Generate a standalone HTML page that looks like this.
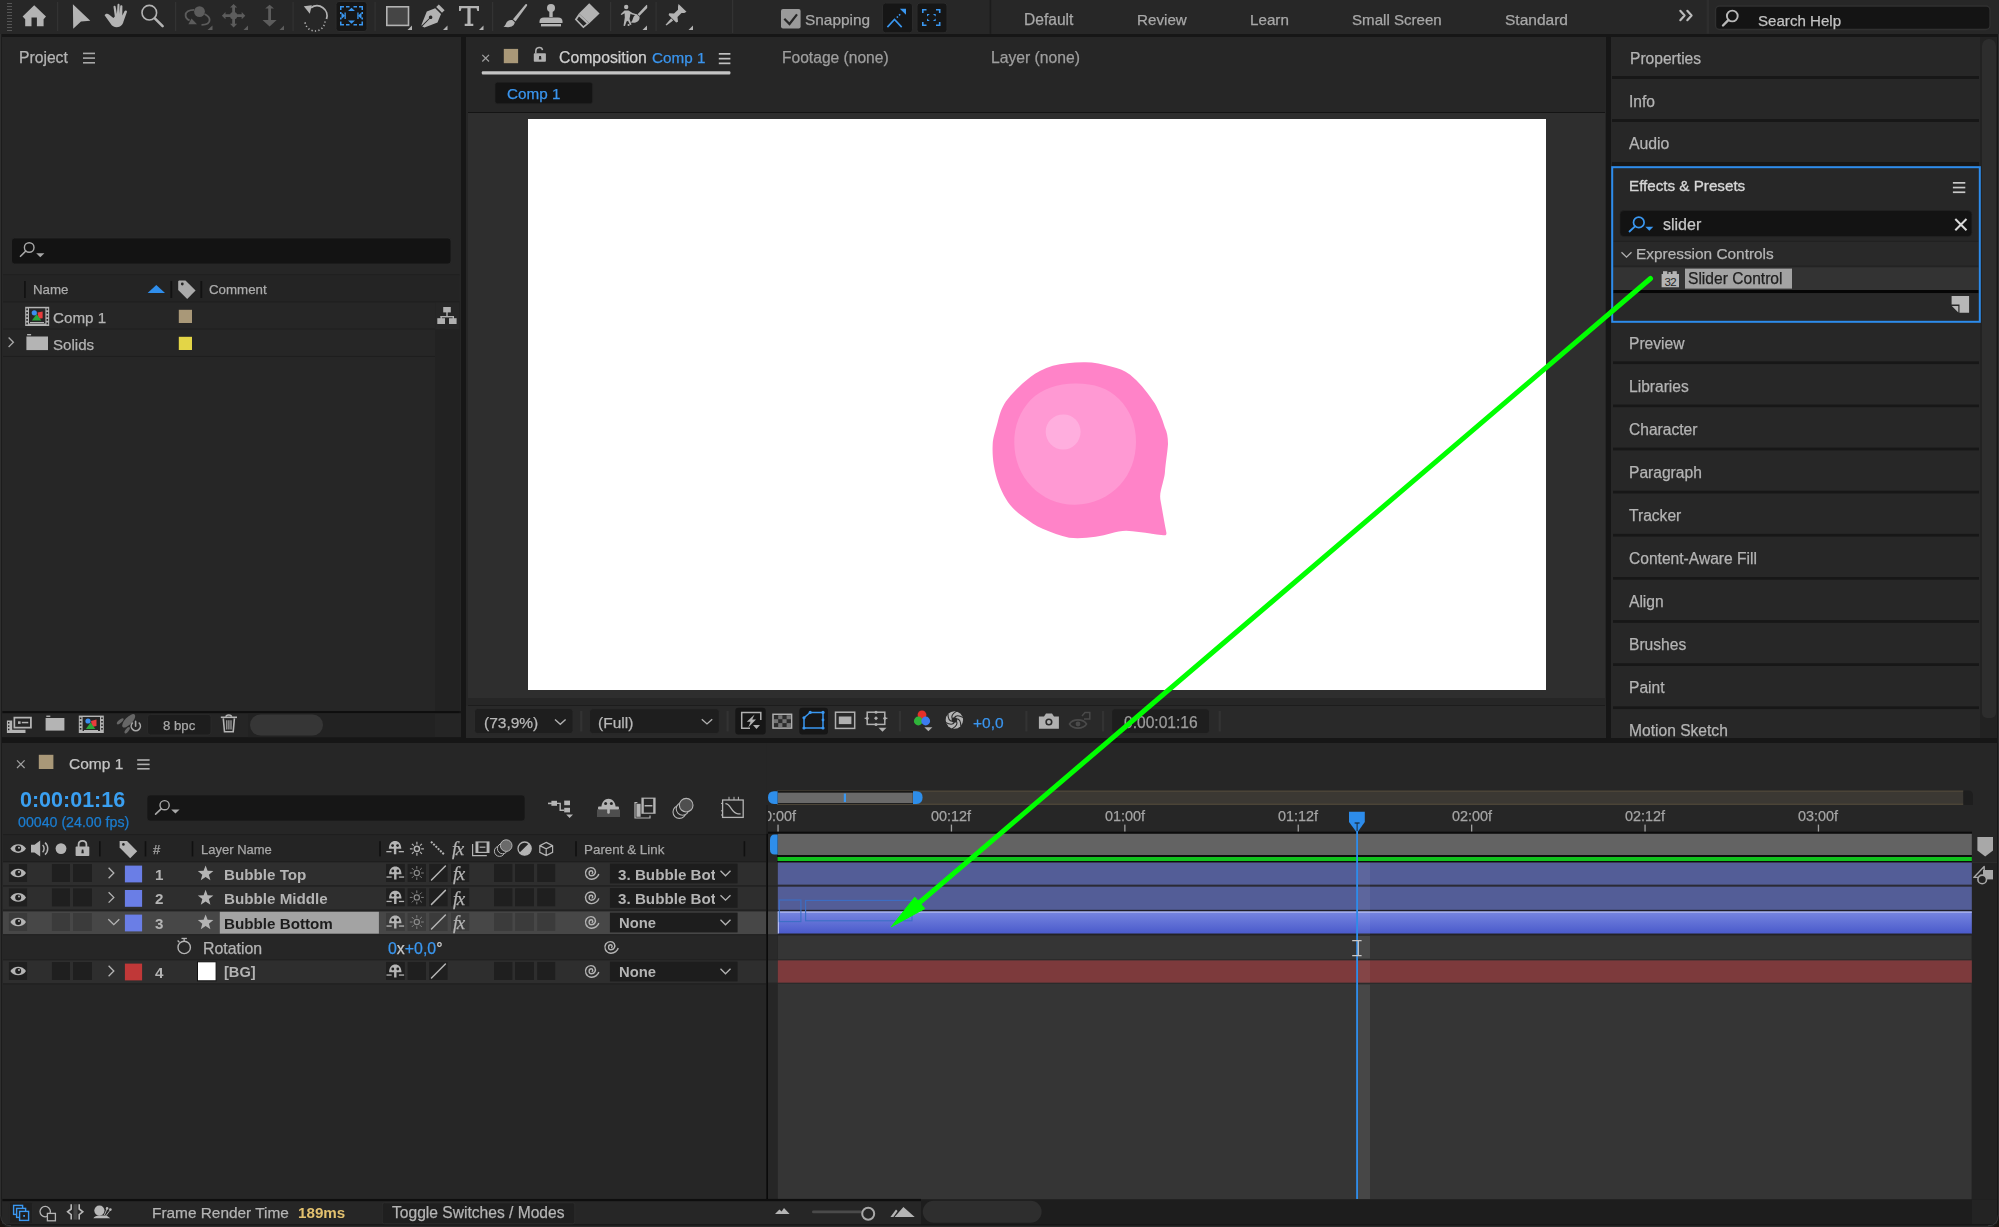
<!DOCTYPE html>
<html><head><meta charset="utf-8">
<style>
*{margin:0;padding:0;box-sizing:border-box}
html,body{width:1999px;height:1227px;overflow:hidden}
body{background:#161616;position:relative;font-family:"Liberation Sans",sans-serif;color:#a9a9a9;font-size:15px;line-height:1;white-space:nowrap}
.a{position:absolute}
.t{position:absolute;line-height:1;will-change:transform;-webkit-text-stroke:0.25px currentColor}
.b{font-weight:bold;-webkit-text-stroke:0}
.blue{color:#3a95ee}
svg{position:absolute;overflow:visible}
</style></head><body>

<!-- ============ TOOLBAR ============ -->
<div class="a" style="left:0;top:0;width:1999px;height:33.7px;background:#272727"></div>
<svg style="left:0;top:0" width="1999" height="34" viewBox="0 0 1999 34">
 <g fill="#565656">
  <rect x="7" y="3" width="5" height="1"/><rect x="7" y="6" width="5" height="1"/><rect x="7" y="9" width="5" height="1"/><rect x="7" y="12" width="5" height="1"/><rect x="7" y="15" width="5" height="1"/><rect x="7" y="18" width="5" height="1"/><rect x="7" y="21" width="5" height="1"/><rect x="7" y="24" width="5" height="1"/><rect x="7" y="27" width="5" height="1"/><rect x="7" y="30" width="5" height="1"/>
 </g>
 <g fill="#333">
  <rect x="57" y="2" width="1.2" height="29"/><rect x="175" y="2" width="1.2" height="29"/><rect x="292.5" y="2" width="1.2" height="29"/><rect x="374.5" y="2" width="1.2" height="29"/><rect x="492" y="2" width="1.2" height="29"/><rect x="610" y="2" width="1.2" height="29"/><rect x="655.5" y="2" width="1.2" height="29"/><rect x="732" y="0" width="1.2" height="33"/>
 </g>
 <g fill="#1c1c1c"><rect x="989.6" y="0" width="1.6" height="33.7"/></g><rect x="1706.6" y="0" width="2.4" height="33.7" fill="#2e2e2e"/>
 <g fill="#b3b3b3">
  <!-- home -->
  <path d="M34.2 5.2 L46 16.6 L43.6 19.2 L43.6 26.2 L36.9 26.2 L36.9 17.6 L31.5 17.6 L31.5 26.2 L25.2 26.2 L25.2 19.2 L22.6 16.6 Z"/>
  <!-- arrow -->
  <path d="M72.9 4.2 L90.3 20.8 L81 21.6 L73.2 28.8 Z"/>
  <!-- hand -->
  <path d="M109 14.5 C107.5 13 105 13.8 104.6 15.2 L110.5 23.5 C112 26 114 27.2 116.8 27.2 C120.5 27.2 122.8 24.8 123.5 21.5 L127 11.8 C127.2 10.5 125.3 9.8 124.6 11 L122.3 15.5 L122.4 6.3 C122.4 5 120.3 5 120.2 6.3 L119.6 14 L119.5 4.7 C119.5 3.5 117.6 3.5 117.5 4.7 L116.9 14 L115.6 6.5 C115.4 5.2 113.4 5.4 113.5 6.8 L114.8 16.6 L113.4 18 Z"/>
  <!-- T -->
  <path d="M459 6 L479 6 L479 11 L477.3 11 L476.5 8.2 L470.6 8.2 L470.6 23.8 L473.3 23.8 L473.3 26 L464.7 26 L464.7 23.8 L467.4 23.8 L467.4 8.2 L461.5 8.2 L460.7 11 L459 11 Z"/>
  <!-- brush -->
  <path d="M525.5 4.2 C526.8 3.6 527.5 4.6 527 5.8 L515.5 21.5 L513 19.3 Z"/>
  <path d="M512.3 20 L514.8 22.3 C514.5 25.5 511.5 27.3 508 27.2 L503.5 26.8 C505.5 25.5 505.8 23.5 507 21.8 C508.3 20.2 510.5 19.6 512.3 20 Z"/>
  <!-- stamp -->
  <circle cx="551" cy="8" r="4"/><rect x="549.3" y="10" width="3.4" height="7"/>
  <path d="M544 17.5 L558 17.5 C561 17.5 562.5 19 562.5 21.5 L562.5 23 L539.5 23 L539.5 21.5 C539.5 19 541 17.5 544 17.5 Z"/>
  <rect x="541" y="24" width="20" height="2.4"/>
  <!-- eraser -->
  <path d="M589.2 3.3 L599.6 13.5 L589.4 23.2 L578.9 13.6 Z"/>
  <path d="M578.9 13.6 L589.4 23.2 L583.3 28.2 L574.8 19.5 Z M579 16.6 L586.6 23.4 L583.4 26 L577 19.6 Z" fill-rule="evenodd"/>
  <!-- puppet -->
  <circle cx="626.2" cy="7" r="2.2"/>
  <path d="M624.5 10.5 L628.5 10.5 L632.5 13 L637.3 14.5 L637 15.5 L632 14.6 L630.5 13.8 L629.5 19 L631.5 24.5 L630 25 L628 20.8 L626.5 21.5 L625 26 L623.5 25.8 L624.8 17.5 L624.6 13.3 L621.5 15 L620.7 14.3 Z"/>
  <path d="M646.6 4.8 L647.2 5.2 L647.2 8 L639.4 16 L637.6 14.2 Z"/>
  <path d="M637 14.6 L639.6 16.8 C640 20.6 637 23.2 632.8 22.8 L630.6 22.4 C632.4 21.5 632.4 20 633.2 17.8 C634 15.6 635.6 14.8 637 14.6 Z"/>
  <circle cx="628.6" cy="25" r="1.1"/>
  <!-- pin -->
  <path d="M678.5 4 L686.5 11.8 L684.3 13 L681.5 13 L677.5 17 L678 21.8 L676.2 22.5 L668.6 15 L669.3 13.2 L674 13.6 L678 9.7 L678 6.6 Z"/>
  <path d="M671.2 18.3 L673.2 20.4 L666.5 25.6 L665.6 24.8 Z"/>
  <!-- corner triangles -->
  <path d="M407.5 30 L412 25.5 L412 30 Z"/><path d="M443 30 L447.5 25.5 L447.5 30 Z"/><path d="M479 30 L483.5 25.5 L483.5 30 Z"/>
  <path d="M642.5 30 L647 25.5 L647 30 Z"/><path d="M688.5 30 L693 25.5 L693 30 Z"/>
 </g>
 <!-- magnifier -->
 <circle cx="149.3" cy="12.7" r="7.3" fill="none" stroke="#b3b3b3" stroke-width="1.6"/>
 <path d="M154.8 18.4 L162.6 26.2" stroke="#b3b3b3" stroke-width="2.6" stroke-linecap="round"/>
 <!-- rect tool -->
 <rect x="386.8" y="6.8" width="21.7" height="18.6" fill="#454545" stroke="#b3b3b3" stroke-width="1.6"/>
 <!-- pen -->
 <g fill="#b3b3b3">
  <path d="M438.8 4.4 L444.6 10.2 L442 12.8 L436.2 7 Z"/>
  <path d="M435.2 8.2 L441 14 L437.5 22.6 L424.5 27.5 L422.2 26.4 L429.8 18.8 C430.6 19.2 431.5 19 432 18.4 C432.6 17.6 432.5 16.6 431.8 16 C431.1 15.3 430 15.4 429.4 16 C428.8 16.6 428.7 17.5 429.1 18.2 L421.5 25.7 L421.5 24.8 L426.8 11.4 Z"/>
 </g>
 <!-- rotate -->
 <path d="M326.5 19 A10 10 0 0 0 311 7.8" fill="none" stroke="#b3b3b3" stroke-width="1.8"/>
 <path d="M303.8 6.2 L311.8 5.2 L309.8 13.8 Z" fill="#b3b3b3"/>
 <path d="M325 21.5 A10 10 0 0 1 305 20.5" fill="none" stroke="#b3b3b3" stroke-width="1.6" stroke-dasharray="1.2 2.3"/>
 <!-- selected box -->
 <rect x="336" y="1.5" width="31" height="30" rx="3" fill="#161616" stroke="#2c2c2c" stroke-width="1"/>
 <g fill="#3a97f0">
  <path d="M340 6 h4 v1.5 h-2.5 v2.5 h-1.5 Z M363 6 h-4 v1.5 h2.5 v2.5 h1.5 Z M340 25.5 h4 v-1.5 h-2.5 v-2.5 h-1.5 Z M363 25.5 h-4 v-1.5 h2.5 v-2.5 h1.5 Z"/>
  <rect x="346" y="6" width="3.5" height="1.5"/><rect x="353.5" y="6" width="3.5" height="1.5"/><rect x="346" y="24" width="3.5" height="1.5"/><rect x="353.5" y="24" width="3.5" height="1.5"/>
  <rect x="340" y="12" width="1.5" height="2"/><rect x="340" y="17.5" width="1.5" height="2"/><rect x="361.5" y="12" width="1.5" height="2"/><rect x="361.5" y="17.5" width="1.5" height="2"/>
  <path d="M348 11 L351.5 7.8 L355 11 Z M348 20.5 L351.5 23.7 L355 20.5 Z M341.5 12.5 L345 15.7 L341.5 19 Z M361.5 12.5 L358 15.7 L361.5 19 Z"/>
  <rect x="344.5" y="12.5" width="1.3" height="6.5"/><rect x="357.3" y="12.5" width="1.3" height="6.5"/>
 </g>
 <!-- dim tools -->
 <g fill="#5c5c5c">
  <circle cx="199.5" cy="11.6" r="5.4"/>
  <path d="M194 9.8 C189 9.8 185.6 12 185.6 15.2 C185.6 17.5 187.2 19.4 189.6 20.4" fill="none" stroke="#5c5c5c" stroke-width="1.8"/>
  <path d="M188.4 24.2 L197 24.2 L191.5 18.5 Z"/>
  <path d="M204.5 14 C207.6 15.5 209.6 17.5 209.6 20 C209.6 23 206.5 24.8 201.5 24.8" fill="none" stroke="#5c5c5c" stroke-width="1.8"/>
  <path d="M233.6 4 L237.2 7.6 L235 7.6 L235 14.3 L241.7 14.3 L241.7 12.1 L245.3 15.7 L241.7 19.3 L241.7 17.1 L235 17.1 L235 23.8 L237.2 23.8 L233.6 27.4 L230 23.8 L232.2 23.8 L232.2 17.1 L225.5 17.1 L225.5 19.3 L221.9 15.7 L225.5 12.1 L225.5 14.3 L232.2 14.3 L232.2 7.6 L230 7.6 Z"/>
  <circle cx="233.6" cy="15.7" r="3.6"/>
  <path d="M269.6 4.8 L274 8.4 L271 8.4 L271 20 L276.7 20 L269.6 26.4 L262.5 20 L268.2 20 L268.2 8.4 L265.2 8.4 Z"/>
  <path d="M207.5 30 L212.5 25.5 L212.5 30 Z"/><path d="M243.5 30 L248 25.5 L248 30 Z"/><path d="M279.5 30 L284 25.5 L284 30 Z"/>
 </g>
</svg>


<!-- toolbar right -->
<svg style="left:0;top:0" width="1999" height="34" viewBox="0 0 1999 34">
 <rect x="781" y="9" width="19.6" height="19.5" rx="2" fill="#9a9a9a"/>
 <path d="M784.3 18.8 L789.5 24 L797 14.3" fill="none" stroke="#262626" stroke-width="2.2"/>
 <rect x="882.5" y="3" width="30" height="29.8" rx="3" fill="#161616" stroke="#2b2b2b" stroke-width="1"/>
 <rect x="917" y="3" width="30" height="29.8" rx="3" fill="#161616" stroke="#2b2b2b" stroke-width="1"/>
 <g stroke="#3a97f0" fill="none" stroke-width="1.6">
  <path d="M887.4 27.1 L894.5 19.5 L901.7 27.1"/>
  <path d="M896.8 17.6 L901 13.4" stroke-dasharray="1.6 1.6"/>
  <path d="M922.8 13 V9.8 H926.5 M936 9.8 H939.7 V13 M922.8 22 V25.2 H926.5 M936 25.2 H939.7 V22"/>
 </g>
 <g fill="#3a97f0">
  <path d="M899.8 8.7 L906 8.7 L906 14.8 Z"/>
  <path d="M927 14 L929.8 14 L927 16.6 Z M935.7 14 L932.9 14 L935.7 16.6 Z M927 21 L929.8 21 L927 18.4 Z M935.7 21 L932.9 21 L935.7 18.4 Z"/>
 </g>
 <!-- >> -->
 <path d="M1680.3 10.8 L1684.6 15.5 L1680.3 20.2 M1687.3 10.8 L1691.6 15.5 L1687.3 20.2" fill="none" stroke="#bcbcbc" stroke-width="2.1" stroke-linecap="round" stroke-linejoin="round"/>
 <!-- search help box -->
 <rect x="1715.5" y="6" width="274.5" height="23.5" rx="4" fill="#141414" stroke="#303030" stroke-width="1.4"/>
 <circle cx="1732.3" cy="16" r="5.4" fill="none" stroke="#b8b8b8" stroke-width="1.9"/>
 <path d="M1728.3 20.2 L1723 25.5" stroke="#b8b8b8" stroke-width="2.4" stroke-linecap="round"/>
</svg>
<div class="t" style="left:805px;top:11.6px;font-size:15.4px;color:#a8a8a8">Snapping</div>
<div class="t" style="left:1024px;top:11.9px;font-size:15.6px;color:#a8a8a8">Default</div>
<div class="t" style="left:1137px;top:11.9px;font-size:15.2px;color:#a8a8a8">Review</div>
<div class="t" style="left:1250px;top:11.9px;font-size:15.2px;color:#a8a8a8">Learn</div>
<div class="t" style="left:1352px;top:11.9px;font-size:15.1px;color:#a8a8a8">Small Screen</div>
<div class="t" style="left:1505px;top:11.9px;font-size:15.5px;color:#a8a8a8">Standard</div>
<div class="t" style="left:1758px;top:12.6px;font-size:15.1px;color:#c2c2c2">Search Help</div>

<!-- ============ PROJECT PANEL ============ -->
<div class="a" style="left:2px;top:37px;width:459px;height:674px;background:#262626"></div>
<div class="t" style="left:19px;top:50.3px;font-size:15.7px;color:#b4b4b4">Project</div>
<svg style="left:0;top:0" width="470" height="745" viewBox="0 0 470 745">
 <g fill="#a8a8a8"><rect x="83" y="52.6" width="12" height="1.6"/><rect x="83" y="57.3" width="12" height="1.6"/><rect x="83" y="62" width="12" height="1.6"/></g>
 <rect x="11.5" y="238" width="439.5" height="26" rx="3" fill="#131313" stroke="#2a2a2a" stroke-width="0.8"/>
 <circle cx="29.2" cy="247.5" r="4.8" fill="none" stroke="#a8a8a8" stroke-width="1.4"/>
 <path d="M25.8 251 L20.5 256.3" stroke="#a8a8a8" stroke-width="1.6" stroke-linecap="round"/>
 <path d="M36.2 253.2 L44.4 253.2 L40.3 257.2 Z" fill="#a8a8a8"/>
 <!-- header row -->
 <rect x="3" y="274.3" width="456.5" height="1" fill="#1f1f1f"/>
 <rect x="3" y="275.3" width="456.5" height="26" fill="#242424"/>
 <rect x="3" y="301.3" width="456.5" height="1.2" fill="#1f1f1f"/>
 <g fill="#121212"><rect x="24" y="281" width="1.8" height="17"/><rect x="170.4" y="281" width="1.8" height="17"/><rect x="200.4" y="281" width="1.8" height="17"/></g>
 <path d="M147.6 293 L156.3 285 L165 293 Z" fill="#2f8eec"/>
 <path d="M179 280.5 L185.5 280.5 L195.6 290.6 L187.2 299 L178.2 290 L178.2 281.3 Z" fill="#aaaaaa"/>
 <circle cx="182.3" cy="284" r="1.4" fill="#242424"/>
 <!-- right column -->
 <rect x="435" y="302.5" width="24.7" height="408.5" fill="#222222"/>
 <rect x="435.5" y="302.5" width="24" height="26.5" fill="#262626"/>
 <g fill="#b0b0b0">
  <rect x="443.2" y="307" width="7.6" height="5.4"/><rect x="446.3" y="312" width="1.4" height="4.5"/>
  <rect x="440.5" y="316" width="13.5" height="1.4"/><rect x="440.5" y="316" width="1.4" height="3"/><rect x="452.6" y="316" width="1.4" height="3"/>
  <rect x="437.3" y="318.2" width="7.7" height="5.8"/><rect x="449" y="318.2" width="7.6" height="5.8"/>
 </g>
 <!-- rows -->
 <rect x="3" y="328.5" width="432" height="1" fill="#1e1e1e"/>
 <rect x="3" y="355.9" width="432" height="1" fill="#1e1e1e"/>
 <!-- comp icon -->
 <rect x="25.2" y="306.8" width="24" height="19.2" fill="#b4b4b4"/>
 <rect x="29" y="308.3" width="16.4" height="15.2" fill="#262626"/>
 <g fill="#262626"><rect x="26.3" y="308.5" width="1.6" height="1.8"/><rect x="26.3" y="312" width="1.6" height="1.8"/><rect x="26.3" y="315.5" width="1.6" height="1.8"/><rect x="26.3" y="319" width="1.6" height="1.8"/><rect x="26.3" y="322.5" width="1.6" height="1.8"/>
 <rect x="46.5" y="308.5" width="1.6" height="1.8"/><rect x="46.5" y="312" width="1.6" height="1.8"/><rect x="46.5" y="315.5" width="1.6" height="1.8"/><rect x="46.5" y="319" width="1.6" height="1.8"/><rect x="46.5" y="322.5" width="1.6" height="1.8"/></g>
 <rect x="30" y="322" width="14" height="1" fill="#b4b4b4"/>
 <path d="M37.5 312.5 L42.6 311.4 L42.6 318.2 L38.5 318.8 Z" fill="#e83c3c"/>
 <path d="M36.6 314 L41.3 320.5 L31.9 320.5 Z" fill="#2aa63a"/>
 <circle cx="34.3" cy="312.8" r="2.6" fill="#3c8ef0"/>
 <rect x="178.8" y="309.8" width="13.2" height="13.2" fill="#a99878"/>
 <!-- solids -->
 <path d="M8.6 337.5 L13.4 342.2 L8.6 347" fill="none" stroke="#a8a8a8" stroke-width="1.3"/>
 <rect x="27.1" y="334" width="4" height="1.4" fill="#b4b4b4"/>
 <rect x="26.4" y="336.5" width="21.6" height="13.6" fill="#b4b4b4"/>
 <rect x="178.8" y="336.8" width="13.2" height="13.2" fill="#e3d547"/>
 <!-- bottom toolbar -->
 <rect x="3" y="711.2" width="456.5" height="2" fill="#0e0e0e"/>
 <rect x="2" y="713.2" width="459" height="24" fill="#252525"/>
 <rect x="248" y="713.2" width="187" height="24" fill="#222222"/>
 <rect x="250" y="714.5" width="73" height="21" rx="10.5" fill="#363636"/>
 <!-- interpret footage -->
 <g fill="#b4b4b4">
  <path d="M13.5 716.8 H31.8 V728.5 H13.5 Z M15.2 718.6 V726.8 H30 V718.6 Z" fill-rule="evenodd"/>
  <rect x="18" y="721.3" width="2.6" height="2.6"/><rect x="21.8" y="721.8" width="6.5" height="1.5"/>
  <path d="M6.9 720.4 H12.2 V729.8 H25.5 V733 H6.9 Z"/>
 </g>
 <g fill="#252525"><rect x="8" y="722" width="1.4" height="1.6"/><rect x="8" y="725.3" width="1.4" height="1.6"/><rect x="8" y="728.6" width="1.4" height="1.6"/></g>
 <!-- folder -->
 <rect x="46.3" y="715.6" width="4" height="1.3" fill="#b4b4b4"/>
 <rect x="45.6" y="718" width="18.8" height="12.6" fill="#b4b4b4"/>
 <!-- new comp -->
 <rect x="78.8" y="715.6" width="25" height="17.4" fill="#b4b4b4"/>
 <rect x="82.6" y="717" width="17.4" height="14" fill="#252525"/>
 <g fill="#252525"><rect x="79.8" y="717.5" width="1.6" height="1.6"/><rect x="79.8" y="721" width="1.6" height="1.6"/><rect x="79.8" y="724.5" width="1.6" height="1.6"/><rect x="79.8" y="728" width="1.6" height="1.6"/>
 <rect x="101.2" y="717.5" width="1.6" height="1.6"/><rect x="101.2" y="721" width="1.6" height="1.6"/><rect x="101.2" y="724.5" width="1.6" height="1.6"/><rect x="101.2" y="728" width="1.6" height="1.6"/></g>
 <rect x="84" y="730" width="14" height="1" fill="#b4b4b4"/>
 <path d="M91 721 L96.5 719.5 L96.5 726 L92 727 Z" fill="#e83c3c"/>
 <path d="M90.6 722.5 L95.3 729 L85.9 729 Z" fill="#2aa63a"/>
 <circle cx="88" cy="721" r="2.6" fill="#3c8ef0"/>
 <!-- render (dim) -->
 <ellipse cx="128.7" cy="720.8" rx="8.6" ry="3.6" transform="rotate(-46 128.7 720.8)" fill="#666"/>
 <ellipse cx="120.2" cy="721.3" rx="4.2" ry="1.6" transform="rotate(-40 120.2 721.3)" fill="#666"/>
 <ellipse cx="127.2" cy="730.2" rx="3.8" ry="1.6" transform="rotate(-52 127.2 730.2)" fill="#666"/>
 <path d="M132.4 723 A4.6 4.6 0 1 0 139.2 723" fill="none" stroke="#a8a8a8" stroke-width="1.6" stroke-linecap="round"/>
 <rect x="134.8" y="720.6" width="1.6" height="6.4" rx="0.8" fill="#a8a8a8"/>
 <!-- 8bpc -->
 <rect x="147.5" y="714.4" width="63.5" height="20.6" rx="3" fill="#1d1d1d" stroke="#2b2b2b" stroke-width="0.8"/>
 <!-- trash -->
 <g fill="none" stroke="#b4b4b4" stroke-width="1.6">
  <path d="M223.3 718.4 L224.5 731.8 L233.2 731.8 L234.4 718.4"/>
  <path d="M220.8 717.3 H237"/>
  <path d="M226 716.8 C226 714.4 231.5 714.4 231.5 716.8"/>
  <path d="M226.8 720.3 V729.5 M228.9 720.3 V729.5 M231 720.3 V729.5" stroke-width="1.1"/>
 </g>
</svg>
<div class="t" style="left:33px;top:283.4px;font-size:13.3px;color:#ababab">Name</div>
<div class="t" style="left:209.4px;top:283.4px;font-size:13.3px;color:#ababab">Comment</div>
<div class="t" style="left:52.8px;top:310px;font-size:15.2px;color:#b4b4b4">Comp 1</div>
<div class="t" style="left:52.8px;top:337.2px;font-size:15.1px;color:#b4b4b4">Solids</div>
<div class="t" style="left:163px;top:719.2px;font-size:13.2px;color:#a8a8a8">8 bpc</div>

<!-- ============ COMP PANEL ============ -->
<div class="a" style="left:466px;top:37px;width:1140px;height:700.7px;background:#262626"></div>
<div class="a" style="left:468px;top:111.8px;width:1137.3px;height:1.4px;background:#141414"></div>
<div class="a" style="left:468px;top:113.2px;width:1137.3px;height:585.3px;background:#2e2e2e"></div>
<div class="a" style="left:468px;top:704.8px;width:1137.3px;height:1.4px;background:#1c1c1c"></div>
<div class="a" style="left:466px;top:706.2px;width:1140px;height:31.5px;background:#292929"></div>
<div class="a" style="left:528px;top:119px;width:1017.5px;height:570.8px;background:#ffffff"></div>
<svg style="left:0;top:0" width="1620" height="745" viewBox="0 0 1620 745">
 <path d="M482.3 54.8 L489 61.5 M489 54.8 L482.3 61.5" stroke="#a0a0a0" stroke-width="1.2"/>
 <rect x="503.8" y="48.9" width="14.3" height="14.3" fill="#a99878"/>
 <!-- lock -->
 <path d="M535.8 53.5 V51 C535.8 46.6 542 46.2 542.5 50.2" fill="none" stroke="#b0b0b0" stroke-width="1.5"/>
 <rect x="533.8" y="53.3" width="12.1" height="8.4" rx="0.8" fill="#b0b0b0"/>
 <path d="M539.2 56 h1.8 l0.4 3.5 h-2.6 Z" fill="#262626"/>
 <g fill="#c0c0c0"><rect x="718.8" y="53" width="11.6" height="1.7"/><rect x="718.8" y="57.8" width="11.6" height="1.7"/><rect x="718.8" y="62.5" width="11.6" height="1.7"/></g>
 <rect x="481.8" y="71.2" width="248.6" height="3.3" rx="1" fill="#c4c4c4"/>
 <rect x="495" y="82.2" width="97.6" height="21.5" rx="2.5" fill="#141414" stroke="#262626" stroke-width="0.6"/>
 <!-- viewer bottom toolbar -->
 <rect x="474.5" y="708.6" width="98.5" height="25" rx="3" fill="#1e1e1e" stroke="#2c2c2c" stroke-width="0.8"/>
 <path d="M555 719.5 L560.3 724.2 L565.6 719.5" fill="none" stroke="#b0b0b0" stroke-width="1.4"/>
 <rect x="580.2" y="711" width="2.2" height="20.5" fill="#333"/>
 <rect x="589.6" y="708.8" width="129.7" height="24.8" rx="3" fill="#1e1e1e" stroke="#2c2c2c" stroke-width="0.8"/>
 <path d="M701.8 719.2 L707 723.9 L712.2 719.2" fill="none" stroke="#b0b0b0" stroke-width="1.4"/>
 <rect x="726.5" y="711" width="2.2" height="20.5" fill="#333"/>
 <rect x="735.3" y="707.7" width="30.4" height="26.7" rx="3" fill="#161616"/>
 <rect x="799.3" y="707.7" width="28.7" height="26.7" rx="3" fill="#161616"/>
 <g fill="none" stroke="#b0b0b0" stroke-width="1.5">
  <path d="M750 728.3 H741.7 V712.6 H760.8 V720"/>
  <rect x="773" y="714.3" width="18.6" height="13.8"/>
  <rect x="835.5" y="712.2" width="19.2" height="16.2"/>
  <rect x="867.2" y="712.2" width="17.6" height="12.2"/>
 </g>
 <path d="M754.6 714.6 L746.8 721.8 L750.6 721.8 L748.2 727.4 L756 719.6 L752.2 719.6 Z" fill="#b0b0b0"/>
 <path d="M753 725 L760 725 L756.5 729 Z" fill="#b0b0b0"/>
 <g fill="#2c2c2c"><rect x="774" y="715.3" width="4.2" height="3.9"/><rect x="782.4" y="715.3" width="4.2" height="3.9"/><rect x="778.2" y="719.2" width="4.2" height="3.9"/><rect x="786.6" y="719.2" width="4.2" height="3.9"/><rect x="774" y="723.1" width="4.2" height="3.9"/><rect x="782.4" y="723.1" width="4.2" height="3.9"/></g>
 <g fill="#747474"><rect x="778.2" y="715.3" width="4.2" height="3.9"/><rect x="786.6" y="715.3" width="4.2" height="3.9"/><rect x="774" y="719.2" width="4.2" height="3.9"/><rect x="782.4" y="719.2" width="4.2" height="3.9"/><rect x="778.2" y="723.1" width="4.2" height="3.9"/><rect x="786.6" y="723.1" width="4.2" height="3.9"/></g>
 <path d="M804 728 V717.8 L810.2 712.4 H823 V728 Z" fill="none" stroke="#3a97f0" stroke-width="1.5"/>
 <g fill="#3a97f0"><circle cx="804" cy="728" r="1.6"/><circle cx="823" cy="728" r="1.6"/><circle cx="804" cy="717.8" r="1.6"/><circle cx="810.2" cy="712.4" r="1.6"/><circle cx="823" cy="712.4" r="1.6"/><circle cx="823" cy="720" r="1.4"/></g>
 <rect x="838.8" y="716.5" width="12.6" height="7.6" fill="#b0b0b0"/>
 <g fill="#b0b0b0">
  <circle cx="876" cy="712.2" r="1.5"/><circle cx="876" cy="724.4" r="1.5"/><circle cx="867.2" cy="718.3" r="1.5"/><circle cx="884.8" cy="718.3" r="1.5"/>
  <path d="M876 716.3 L878 718.3 L876 720.3 L874 718.3 Z"/>
  <rect x="864.6" y="717.7" width="2.6" height="1.2"/><rect x="884.8" y="717.7" width="2.6" height="1.2"/>
  <path d="M878.5 727.8 L886.5 727.8 L882.5 731.8 Z"/>
 </g>
 <rect x="898.8" y="711" width="2.2" height="20.5" fill="#333"/>
 <circle cx="922" cy="714.8" r="4.4" fill="#e5302a"/>
 <circle cx="918.3" cy="721" r="4.4" fill="#2fb43a"/>
 <circle cx="925.7" cy="721" r="4.4" fill="#3c7cf0"/>
 <path d="M924.4 727.2 L932.4 727.2 L928.4 731.2 Z" fill="#b0b0b0"/>
 <!-- aperture -->
 <circle cx="954.4" cy="720" r="8.7" fill="#b4b4b4"/>
 <circle cx="954.4" cy="720" r="2.8" fill="#292929"/>
 <path d="M954.40 717.60 Q956.62 713.89 963.29 717.62 M956.48 718.80 Q960.80 718.87 960.91 726.51 M956.48 721.20 Q958.58 724.98 952.02 728.89 M954.40 722.40 Q952.18 726.11 945.51 722.38 M952.32 721.20 Q948.00 721.13 947.89 713.49 M952.32 718.80 Q950.22 715.02 956.78 711.11 " fill="none" stroke="#292929" stroke-width="1.1"/>
 <rect x="1025.3" y="711" width="2.2" height="20.5" fill="#333"/>
 <!-- camera -->
 <path d="M1038.9 716.5 H1044 L1046 713.6 H1052 L1054 716.5 H1058.9 V728.8 H1038.9 Z" fill="#b0b0b0"/>
 <circle cx="1048.9" cy="722" r="3.6" fill="#292929"/><circle cx="1048.9" cy="722" r="2" fill="#b0b0b0"/>
 <!-- eye dim -->
 <path d="M1069.5 724 C1073 718.5 1083 718.5 1086.5 724 C1083 729.5 1073 729.5 1069.5 724 Z" fill="none" stroke="#4a4a4a" stroke-width="1.6"/>
 <circle cx="1078" cy="724" r="2.4" fill="#4a4a4a"/>
 <path d="M1082 716 L1085 712.5 H1089.8 V719 H1084" fill="none" stroke="#4a4a4a" stroke-width="1.4"/>
 <rect x="1102" y="711" width="2.2" height="20.5" fill="#333"/>
 <rect x="1111.7" y="708.8" width="97.7" height="24.8" rx="3" fill="#1e1e1e" stroke="#2c2c2c" stroke-width="0.8"/>
 <rect x="1218.6" y="711" width="2.2" height="20.5" fill="#333"/>
</svg>
<div class="t" style="left:558.7px;top:49.7px;font-size:15.8px;color:#d0d0d0">Composition</div>
<div class="t blue" style="left:651.7px;top:49.9px;font-size:15.25px">Comp 1</div>
<div class="t" style="left:782px;top:49.9px;font-size:15.6px;color:#9e9e9e">Footage (none)</div>
<div class="t" style="left:991px;top:49.9px;font-size:15.7px;color:#9e9e9e">Layer (none)</div>
<div class="t blue" style="left:507px;top:86.3px;font-size:15.25px">Comp 1</div>
<div class="t" style="left:484px;top:714.6px;font-size:15.5px;color:#b8b8b8">(73,9%)</div>
<div class="t" style="left:598.4px;top:715.2px;font-size:15.5px;color:#b8b8b8">(Full)</div>
<div class="t blue" style="left:973.2px;top:715.3px;font-size:15.5px">+0,0</div>
<div class="t" style="left:1123.7px;top:715.3px;font-size:15.6px;color:#9c9c9c">0:00:01:16</div>


<svg style="left:0;top:0" width="1620" height="745" viewBox="0 0 1620 745">
 <path d="M1083.4 362.2 C1072 362.5 1062 363.5 1052.8 365.7 C1044 368.5 1036 372.5 1030.4 376.9 C1020 385 1012 393 1006 401.3 C1001 409 999.5 415 997.8 421.7 C995 432 993 438 992.7 444.1 C992.3 452 992.8 458 993.7 464.5 C996 478 1000 489 1006 499.1 C1011 507.5 1017 512.5 1024.3 517.4 C1030 521.5 1035 525.5 1042.6 528.7 C1052 532.8 1060 535.5 1069.1 537.8 C1078 538.8 1087 538 1095.6 536.8 C1107 535 1116 531 1126.2 530.7 C1138 531 1150 534 1163.5 535.3 C1166 535.6 1166.8 534.5 1166.3 532.3 C1164 521 1162.5 511 1160.8 502 C1159.8 497 1160 494 1161 490 C1163 482 1164.5 477 1164.9 472.6 C1165.6 463 1167.5 452 1168 444.1 C1168 437 1167 432 1164.9 427.8 C1162 418 1159 411 1154.7 403.3 C1148 393 1140 383 1130.2 374.8 C1124 370 1118 368 1111.9 366.7 C1102 364 1092 361.8 1083.4 362.2 Z" fill="#ff83c8"/>
 <path d="M1075 383.6 C1093 383.3 1108 388 1119 399 C1130 410 1136.2 425 1136 442 C1135.8 458 1131 473 1120 485 C1109 497 1093 504.5 1075 504.8 C1058 505 1043 498 1032 487 C1020 475 1014.5 459 1014.3 443 C1014 426 1020 411 1031 399.5 C1042 389 1058 383.8 1075 383.6 Z" fill="#ff99d3"/>
 <path d="M1063.3 414.5 C1073 414.4 1080.6 422 1080.6 431.8 C1080.6 441.5 1073 449.6 1063.3 449.6 C1053.5 449.6 1045.7 441.5 1045.7 431.8 C1045.7 422 1053.5 414.6 1063.3 414.5 Z" fill="#ffaede"/>
</svg>

<!-- ============ RIGHT PANELS ============ -->
<div class="a" style="left:1611px;top:37px;width:369.3px;height:700.8px;background:#272727"></div>
<div class="a" style="left:1980.3px;top:37px;width:17px;height:700.8px;background:#222222"></div>
<div class="a" style="left:1981.8px;top:39px;width:14.2px;height:679px;background:#2d2d2d;border-radius:7px 7px 5px 5px"></div>
<svg style="left:0;top:0" width="1999" height="745" viewBox="0 0 1999 745">
 <g fill="#171717">
  <rect x="1612" y="76" width="367" height="3"/><rect x="1612" y="119" width="367" height="3"/><rect x="1612" y="162" width="367" height="4"/>
<rect x="1613" y="361.40" width="366" height="2.7"/><rect x="1613" y="404.52" width="366" height="2.7"/><rect x="1613" y="447.64" width="366" height="2.7"/><rect x="1613" y="490.76" width="366" height="2.7"/><rect x="1613" y="533.88" width="366" height="2.7"/><rect x="1613" y="577.00" width="366" height="2.7"/><rect x="1613" y="620.12" width="366" height="2.7"/><rect x="1613" y="663.24" width="366" height="2.7"/><rect x="1613" y="706.36" width="366" height="2.7"/>
 </g>
 <!-- effects panel -->
 <rect x="1613.2" y="168.2" width="365.6" height="152.8" fill="#272727"/>
 <g fill="#c8c8c8"><rect x="1952.9" y="182" width="12.4" height="1.7"/><rect x="1952.9" y="186.7" width="12.4" height="1.7"/><rect x="1952.9" y="191.4" width="12.4" height="1.7"/></g>
 <rect x="1620" y="210.6" width="351.8" height="26" rx="4" fill="#131313" stroke="#242424" stroke-width="0.6"/>
 <circle cx="1638.8" cy="222.4" r="5.3" fill="none" stroke="#3a97f0" stroke-width="1.7"/>
 <path d="M1635 226.3 L1629.5 231.5" stroke="#3a97f0" stroke-width="1.8" stroke-linecap="round"/>
 <path d="M1645.3 226.7 L1653.3 226.7 L1649.3 230.7 Z" fill="#3a97f0"/>
 <path d="M1955.3 219 L1966.5 230.2 M1966.5 219 L1955.3 230.2" stroke="#dadada" stroke-width="2"/>
 <rect x="1613.2" y="240.8" width="365.4" height="1" fill="#202020"/>
 <rect x="1613.2" y="241.8" width="365.4" height="24" fill="#292929"/>
 <rect x="1613.2" y="265.7" width="365.4" height="1.6" fill="#232323"/>
 <rect x="1613.2" y="267.3" width="365.4" height="22.8" fill="#333333"/>
 <rect x="1613.2" y="290" width="365.4" height="3.2" fill="#060606"/>
 <rect x="1613.2" y="293.2" width="365.4" height="27.6" fill="#282828"/>
 <path d="M1621.5 252.2 L1626.5 257.2 L1631.5 252.2" fill="none" stroke="#b0b0b0" stroke-width="1.3"/>
 <!-- slider icon -->
 <path d="M1661.6 274 H1668.5 V272 H1670.8 V274 H1679 V287.2 H1661.6 Z" fill="#b4b4b4"/>
 <rect x="1663" y="271.2" width="4.3" height="3" fill="#b4b4b4"/><rect x="1672.5" y="271.2" width="4.3" height="3" fill="#b4b4b4"/>
 <rect x="1685" y="268.6" width="107" height="20" fill="#a3a3a3"/>
 <text x="1670.3" y="286" font-family="Liberation Sans" font-size="11.5" fill="#262626" text-anchor="middle" letter-spacing="-0.5">32</text>
 <!-- new preset icon -->
 <path d="M1951.6 295.9 H1969.1 V312.8 H1959.5 V304.5 H1951.6 Z" fill="#b8b8b8"/>
 <path d="M1951.8 306 H1958.3 V312.6 Z" fill="#b8b8b8"/>
 <rect x="1612.2" y="167.2" width="367.6" height="154.6" fill="none" stroke="#2d8cec" stroke-width="2"/>
</svg>
<div class="t" style="left:1629.5px;top:51.3px;font-size:15.6px;color:#b4b4b4">Properties</div>
<div class="t" style="left:1629.2px;top:93.8px;font-size:15.6px;color:#b4b4b4">Info</div>
<div class="t" style="left:1628.9px;top:136.2px;font-size:15.8px;color:#b4b4b4">Audio</div>
<div class="t" style="left:1629.3px;top:178.4px;font-size:15.2px;color:#d6d6d6;-webkit-text-stroke:0.35px #d6d6d6">Effects &amp; Presets</div>
<div class="t" style="left:1663px;top:217.4px;font-size:16px;color:#c8c8c8">slider</div>
<div class="t" style="left:1635.5px;top:245.9px;font-size:15.4px;color:#b4b4b4">Expression Controls</div>
<div class="t" style="left:1688px;top:271.4px;font-size:15.6px;color:#1e1e1e">Slider Control</div>
<div class="t" style="left:1629px;top:336.4px;font-size:15.6px;color:#b4b4b4">Preview</div>
<div class="t" style="left:1629px;top:379.4px;font-size:15.6px;color:#b4b4b4">Libraries</div>
<div class="t" style="left:1629px;top:422.4px;font-size:15.6px;color:#b4b4b4">Character</div>
<div class="t" style="left:1629px;top:465.4px;font-size:15.6px;color:#b4b4b4">Paragraph</div>
<div class="t" style="left:1629px;top:508.4px;font-size:15.6px;color:#b4b4b4">Tracker</div>
<div class="t" style="left:1629px;top:551.4px;font-size:15.6px;color:#b4b4b4">Content-Aware Fill</div>
<div class="t" style="left:1629px;top:594.4px;font-size:15.6px;color:#b4b4b4">Align</div>
<div class="t" style="left:1629px;top:637.4px;font-size:15.6px;color:#b4b4b4">Brushes</div>
<div class="t" style="left:1629px;top:680.4px;font-size:15.6px;color:#b4b4b4">Paint</div>
<div class="a" style="left:1611px;top:709.6px;width:369px;height:28.2px;overflow:hidden;background:#272727"><div class="t" style="left:18px;top:13.8px;font-size:15.6px;color:#b4b4b4">Motion Sketch</div></div>

<!-- ============ TIMELINE ============ -->

<!-- ============ TIMELINE RIGHT ============ -->
<svg style="left:0;top:0" width="1999" height="1227" viewBox="0 0 1999 1227">
<rect x="766" y="743" width="1231" height="458" fill="#262626"/>
<rect x="777.8" y="862.4" width="1194" height="337" fill="#353535"/>
<rect x="1971.8" y="862" width="25.2" height="339" fill="#222222"/>
<rect x="766.2" y="805" width="1.8" height="28.8" fill="#1e1e1e"/>
<rect x="766.2" y="833.8" width="1.8" height="367" fill="#0a0a0a"/>
<rect x="777" y="790.6" width="1186.4" height="14.3" fill="#3b3833"/>
<rect x="777" y="790.6" width="1186.4" height="1.3" fill="#4e4639"/>
<rect x="777" y="803.6" width="1186.4" height="1.3" fill="#4e4639"/>
<path d="M1963.4 790.6 H1968 Q1973 790.6 1973 795.6 V805 H1963.4 Z" fill="#1e1e1e"/>
<rect x="776" y="791.2" width="137.6" height="12.8" fill="#0e0e0e"/>
<rect x="777.6" y="792.6" width="135.2" height="10.6" fill="#6a6a6a"/>
<rect x="843.8" y="793.6" width="2.2" height="8.4" fill="#3a97f0"/>
<path d="M777.6 791.2 H774 Q768 791.2 768 797.6 Q768 804 774 804 H777.6 Z" fill="#2e8eea"/>
<path d="M913 791.2 H916.4 Q922.6 791.2 922.6 797.6 Q922.6 804 916.4 804 H913 Z" fill="#2e8eea"/>
<rect x="777.4" y="824.6" width="1.3" height="7.2" fill="#a0a0a0"/>
<rect x="950.8" y="824.6" width="1.3" height="7.2" fill="#a0a0a0"/>
<rect x="1124.2" y="824.6" width="1.3" height="7.2" fill="#a0a0a0"/>
<rect x="1297.6000000000001" y="824.6" width="1.3" height="7.2" fill="#a0a0a0"/>
<rect x="1471.0" y="824.6" width="1.3" height="7.2" fill="#a0a0a0"/>
<rect x="1644.4" y="824.6" width="1.3" height="7.2" fill="#a0a0a0"/>
<rect x="1817.8000000000002" y="824.6" width="1.3" height="7.2" fill="#a0a0a0"/>
<rect x="768" y="831.7" width="1204" height="2.1" fill="#0c0c0c"/>
<rect x="777.6" y="833.8" width="1194.2" height="21.2" fill="#636363"/>
<rect x="768" y="833.8" width="9.6" height="21.2" fill="#262626"/>
<path d="M777.6 834.4 H774.6 Q770 834.4 770 840 V849.6 Q770 854.6 774.6 854.6 H777.6 Z" fill="#2e8eea"/>
<rect x="777" y="855" width="1194.8" height="2" fill="#0c0c0c"/>
<rect x="777.6" y="857" width="1194.2" height="4" fill="#11c21d"/>
<rect x="777" y="861" width="1194.8" height="1.4" fill="#0c0c0c"/>
<rect x="768" y="862.4" width="9.8" height="22.8" fill="#2e2e2e"/>
<rect x="768" y="886.8" width="9.8" height="22.8" fill="#2e2e2e"/>
<rect x="768" y="911.4" width="9.8" height="22.8" fill="#454545"/>
<rect x="768" y="935.4" width="9.8" height="24" fill="#2a2a2a"/>
<rect x="768" y="960.4" width="9.8" height="22.2" fill="#333333"/>
<rect x="777.8" y="862.6" width="1194" height="22.2" fill="#535d97"/>
<rect x="777.8" y="884.8" width="1194" height="1.9" fill="#2a2a35"/>
<rect x="777.8" y="886.7" width="1194" height="23.2" fill="#535d97"/>
<rect x="777.8" y="909.9" width="1194" height="1.6" fill="#1f1f28"/>
<defs><linearGradient id="selg" x1="0" y1="0" x2="0" y2="1"><stop offset="0" stop-color="#7786e0"/><stop offset="1" stop-color="#4a5acb"/></linearGradient></defs>
<rect x="777.8" y="911.5" width="1194" height="22.2" fill="url(#selg)"/>
<rect x="777.8" y="911.5" width="1194" height="1.2" fill="#b4bdf0"/>
<rect x="777.8" y="911.5" width="1.2" height="22.2" fill="#b4bdf0"/>
<rect x="777.8" y="933.7" width="1194" height="1.7" fill="#222226"/>
<rect x="777.8" y="959.2" width="1194" height="1.2" fill="#2a2a2a"/>
<rect x="777.8" y="960.4" width="1194" height="22.4" fill="#7d3a3c"/>
<rect x="777.8" y="982.8" width="1194" height="1" fill="#2a2a2a"/>
<rect x="779.3" y="900" width="21.6" height="21.6" fill="none" stroke="#3b6fc6" stroke-width="1.1"/>
<rect x="805.6" y="900.4" width="106.4" height="20.4" fill="none" stroke="#3b6fc6" stroke-width="1.1"/>
<rect x="1358" y="862.4" width="12" height="73" fill="#ffffff" fill-opacity="0.06"/>
<rect x="1358" y="936" width="12" height="22.6" fill="#ffffff" fill-opacity="0.1"/>
<rect x="1358" y="960.4" width="12" height="22.4" fill="#ffffff" fill-opacity="0.06"/>
<rect x="1356" y="984.6" width="14" height="214.4" fill="#ffffff" fill-opacity="0.09"/>
<rect x="1356.2" y="822" width="1.8" height="377" fill="#2d8ceb"/>
<path d="M1349 811.8 H1364.8 V822 L1358 831.4 H1356 L1349 822 Z" fill="#2d8ceb"/>
<rect x="1354.6" y="822.4" width="5" height="1.2" fill="#1a2a3a"/><rect x="1356.6" y="823" width="1" height="8" fill="#1a2a3a"/>
<path d="M1352.2 940.6 H1361.6 M1352.2 955.6 H1361.6" stroke="#c8c8c8" stroke-width="1.3"/>
<rect x="1357.6" y="940.6" width="1.3" height="15" fill="#c8c8c8"/>
<path d="M1977.4 837 H1993 V850.6 L1985.2 856.6 L1977.4 850.6 Z" fill="#a8a8a8"/>
<path d="M1984.2 866.4 L1973.8 877.4 H1984.2 Z" fill="none" stroke="#a8a8a8" stroke-width="1.4" stroke-linejoin="round"/>
<rect x="1983" y="870" width="10" height="9.4" fill="#a8a8a8"/>
<circle cx="1982.2" cy="879.4" r="4.3" fill="#222" stroke="#a8a8a8" stroke-width="1.6"/>
<rect x="1972" y="862" width="25" height="1" fill="#2c2c2c"/>
<rect x="3" y="1198.9" width="918" height="2.3" fill="#0e0e0e"/>
<rect x="2" y="1201.2" width="919" height="23" fill="#262626"/>
<rect x="921" y="1199.4" width="1076" height="24.6" fill="#1d1d1d"/>
<rect x="1972" y="1199.4" width="25" height="24.6" fill="#232323"/>
<rect x="922.8" y="1200.7" width="118.8" height="22" rx="11" fill="#2e2e2e"/>
<rect x="9.4" y="1202.2" width="23" height="21" rx="1" fill="#1f1f1f" stroke="#2c2c2c" stroke-width="0.6"/>
<g fill="none" stroke="#3a97f0" stroke-width="1.4"><rect x="13.6" y="1205.4" width="9" height="9"/><rect x="16.6" y="1208.4" width="9" height="9" fill="#1f1f1f"/><rect x="19.6" y="1211.4" width="9" height="9" fill="#1f1f1f"/></g>
<rect x="23.2" y="1215" width="1.8" height="1.8" fill="#3a97f0"/>
<circle cx="45.2" cy="1211.6" r="5.2" fill="none" stroke="#b4b4b4" stroke-width="1.3"/>
<rect x="47.4" y="1213.4" width="8" height="7.4" fill="#262626" stroke="#b4b4b4" stroke-width="1.3"/>
<rect x="73.5" y="1204.2" width="4" height="15.4" fill="#444"/>
<path d="M71.2 1204.2 V1209 L67.6 1211.8 L71.2 1214.6 V1219.6 M79.2 1204.2 V1209 L82.8 1211.8 L79.2 1214.6 V1219.6" fill="none" stroke="#b8b8b8" stroke-width="1.6"/>
<circle cx="99.4" cy="1210.6" r="5.1" fill="#b8b8b8"/>
<path d="M93.4 1218.2 C94.5 1216.4 96.5 1215.6 99 1215.6 H106.6 L110.2 1218.2 Z" fill="#b8b8b8"/>
<path d="M104.4 1215 L107.1 1208.6 M106 1215.6 L110.4 1209.8" stroke="#b8b8b8" stroke-width="0.9"/>
<circle cx="107.1" cy="1208.4" r="1.3" fill="#b8b8b8"/><circle cx="110.4" cy="1209.6" r="1.3" fill="#b8b8b8"/>
<rect x="382.3" y="1202.8" width="192.5" height="21" rx="2" fill="#1f1f1f" stroke="#2e2e2e" stroke-width="0.8"/>
<path d="M775 1214 L779.4 1209.4 L781.6 1211.4 L784 1208 L789.6 1214 Z" fill="#b4b4b4"/>
<rect x="812" y="1210.6" width="50" height="2.6" rx="1.3" fill="#4a4a4a"/>
<circle cx="868.2" cy="1213.8" r="6" fill="#262626" stroke="#a8a8a8" stroke-width="2"/>
<path d="M890.4 1217 L896 1209.6 L897.6 1211 L893.4 1217 Z M894.6 1217 L903.4 1207 L914.7 1217 Z" fill="#b4b4b4"/>
<rect x="0" y="1225.6" width="1999" height="1.4" fill="#2c2c2c"/>
<path d="M0 1217 Q0 1227 10 1227 H0 Z" fill="#1a1510"/>
<path d="M0.6 1215 Q1 1225.8 11 1225.8" fill="none" stroke="#383838" stroke-width="1"/>
<path d="M1999 1217 Q1999 1227 1989 1227 H1999 Z" fill="#1a1510"/>
<path d="M1998.4 1215 Q1998 1225.8 1988 1225.8" fill="none" stroke="#383838" stroke-width="1"/>
</svg>
<div class="a" style="left:768px;top:800px;width:1204px;height:30px;overflow:hidden"><div class="t" style="left:-8.3px;top:9.399999999999977px;font-size:14.4px;color:#a4a4a4;width:40px;text-align:center">0:00f</div><div class="t" style="left:163.29999999999998px;top:9.399999999999977px;font-size:14.4px;color:#a4a4a4;width:40px;text-align:center">00:12f</div><div class="t" style="left:336.69999999999993px;top:9.399999999999977px;font-size:14.4px;color:#a4a4a4;width:40px;text-align:center">01:00f</div><div class="t" style="left:510.1px;top:9.399999999999977px;font-size:14.4px;color:#a4a4a4;width:40px;text-align:center">01:12f</div><div class="t" style="left:683.4999999999999px;top:9.399999999999977px;font-size:14.4px;color:#a4a4a4;width:40px;text-align:center">02:00f</div><div class="t" style="left:856.9px;top:9.399999999999977px;font-size:14.4px;color:#a4a4a4;width:40px;text-align:center">02:12f</div><div class="t" style="left:1030.3000000000002px;top:9.399999999999977px;font-size:14.4px;color:#a4a4a4;width:40px;text-align:center">03:00f</div></div>
<div class="t" style="left:152.4px;top:1205px;font-size:15.4px;color:#b4b4b4">Frame Render Time</div>
<div class="t b" style="left:298px;top:1205px;font-size:15.2px;color:#e3c16f">189ms</div>
<div class="t" style="left:391.7px;top:1205.2px;font-size:15.6px;color:#b4b4b4">Toggle Switches / Modes</div>

<!-- ============ TIMELINE LEFT ============ -->
<svg style="left:0;top:0" width="780" height="1227" viewBox="0 0 780 1227">
<rect x="2" y="743" width="764.2" height="455.9" fill="#262626"/>
<rect x="3" y="834" width="763" height="1.2" fill="#1e1e1e"/>
<rect x="3" y="835.2" width="763" height="25.8" fill="#242424"/>
<rect x="3" y="861" width="763" height="1.4" fill="#1e1e1e"/>
<rect x="3" y="862.4" width="763" height="22.8" fill="#2e2e2e"/>
<rect x="3" y="885.1999999999999" width="763" height="1.6" fill="#222222"/>
<rect x="8.9" y="864.0" width="18.2" height="18" fill="#1f1f1f"/>
<path d="M10.399999999999999 873.0 C13.7 867.2 22.7 867.2 26.0 873.0 C22.7 878.8 13.7 878.8 10.399999999999999 873.0 Z" fill="#b4b4b4"/>
<circle cx="18.2" cy="873.0" r="3" fill="#1f1f1f"/><circle cx="19.0" cy="872.1" r="1" fill="#b4b4b4"/>
<rect x="51.9" y="864.0" width="18.1" height="18" fill="#1f1f1f"/>
<rect x="73" y="864.0" width="18.9" height="18" fill="#1f1f1f"/>
<path d="M108.6 867.8 L113.8 873.0 L108.6 878.1999999999999" fill="none" stroke="#b4b4b4" stroke-width="1.3"/>
<rect x="124.9" y="865.6" width="17.2" height="16.8" fill="#6a7ee6"/>
<path d="M205.60 865.40 L207.62 870.81 L213.40 871.07 L208.88 874.66 L210.42 880.23 L205.60 877.04 L200.78 880.23 L202.32 874.66 L197.80 871.07 L203.58 870.81 Z" fill="#b4b4b4"/>
<rect x="386" y="863.9" width="18.8" height="18" fill="#1f1f1f"/>
<rect x="407.6" y="863.9" width="18.4" height="18" fill="#1f1f1f"/>
<rect x="429.2" y="863.9" width="18.4" height="18" fill="#1f1f1f"/>
<rect x="451" y="863.9" width="18.2" height="18" fill="#1f1f1f"/>
<rect x="494" y="863.9" width="18.4" height="18" fill="#1f1f1f"/>
<rect x="515.1" y="863.9" width="18.9" height="18" fill="#1f1f1f"/>
<rect x="537.2" y="863.9" width="18" height="18" fill="#1f1f1f"/>
<path d="M389.1 874.2 C389.1 869.0 392.0 866.4 395.3 866.4 C398.6 866.4 401.5 869.0 401.5 874.2 L396.5 874.2 L396.5 879.6 L394.1 879.6 L394.1 874.2 Z" fill="#b4b4b4"/>
<circle cx="392.8" cy="871.0" r="1.4" fill="#1f1f1f"/><circle cx="397.8" cy="871.0" r="1.4" fill="#1f1f1f"/>
<rect x="386.5" y="876.4" width="5.2" height="1.3" fill="#b4b4b4"/><rect x="398.9" y="876.4" width="5.2" height="1.3" fill="#b4b4b4"/>
<circle cx="416.8" cy="873.0" r="2.6" fill="none" stroke="#8a8a8a" stroke-width="1.2"/>
<path d="M416.8 866.0 V868.7 M416.8 877.3 V880.0 M409.8 873.0 H412.5 M421.1 873.0 H423.8 M411.8 868.0 L413.7 869.9 M419.90000000000003 876.1 L421.8 878.0 M421.8 868.0 L419.90000000000003 869.9 M413.7 876.1 L411.8 878.0" stroke="#8a8a8a" stroke-width="0.9"/>
<path d="M431.5 880.0 L445.4 866.0" stroke="#b4b4b4" stroke-width="1.5" stroke-linecap="round"/>
<path d="M591.6 873.6 C593.2 873.6 593.2 870.8 591.2 870.8 C588.6 870.8 588.2 875.8 591.4000000000001 875.8 C595.0 875.8 596.2 872.0 594.8000000000001 869.6 C593.2 867.0 588.7 866.8 586.4000000000001 870.0 C584.4000000000001 873.0 585.7 878.6 591.2 879.2 C595.2 879.5 598.2 876.5 598.8000000000001 874.0" fill="none" stroke="#b4b4b4" stroke-width="1.4"/>
<rect x="609.9" y="863.6" width="127.7" height="19.8" fill="#1d1d1d"/>
<path d="M720.5 870.8 L725.5 875.8 L730.5 870.8" fill="none" stroke="#b4b4b4" stroke-width="1.3"/>
<rect x="3" y="886.8" width="763" height="22.8" fill="#2e2e2e"/>
<rect x="3" y="909.5999999999999" width="763" height="1.6" fill="#222222"/>
<rect x="8.9" y="888.4" width="18.2" height="18" fill="#1f1f1f"/>
<path d="M10.399999999999999 897.4 C13.7 891.6 22.7 891.6 26.0 897.4 C22.7 903.1999999999999 13.7 903.1999999999999 10.399999999999999 897.4 Z" fill="#b4b4b4"/>
<circle cx="18.2" cy="897.4" r="3" fill="#1f1f1f"/><circle cx="19.0" cy="896.5" r="1" fill="#b4b4b4"/>
<rect x="51.9" y="888.4" width="18.1" height="18" fill="#1f1f1f"/>
<rect x="73" y="888.4" width="18.9" height="18" fill="#1f1f1f"/>
<path d="M108.6 892.1999999999999 L113.8 897.4 L108.6 902.5999999999999" fill="none" stroke="#b4b4b4" stroke-width="1.3"/>
<rect x="124.9" y="890.0" width="17.2" height="16.8" fill="#6a7ee6"/>
<path d="M205.60 889.80 L207.62 895.21 L213.40 895.47 L208.88 899.06 L210.42 904.63 L205.60 901.44 L200.78 904.63 L202.32 899.06 L197.80 895.47 L203.58 895.21 Z" fill="#b4b4b4"/>
<rect x="386" y="888.3" width="18.8" height="18" fill="#1f1f1f"/>
<rect x="407.6" y="888.3" width="18.4" height="18" fill="#1f1f1f"/>
<rect x="429.2" y="888.3" width="18.4" height="18" fill="#1f1f1f"/>
<rect x="451" y="888.3" width="18.2" height="18" fill="#1f1f1f"/>
<rect x="494" y="888.3" width="18.4" height="18" fill="#1f1f1f"/>
<rect x="515.1" y="888.3" width="18.9" height="18" fill="#1f1f1f"/>
<rect x="537.2" y="888.3" width="18" height="18" fill="#1f1f1f"/>
<path d="M389.1 898.6 C389.1 893.4 392.0 890.8 395.3 890.8 C398.6 890.8 401.5 893.4 401.5 898.6 L396.5 898.6 L396.5 904.0 L394.1 904.0 L394.1 898.6 Z" fill="#b4b4b4"/>
<circle cx="392.8" cy="895.4" r="1.4" fill="#1f1f1f"/><circle cx="397.8" cy="895.4" r="1.4" fill="#1f1f1f"/>
<rect x="386.5" y="900.8" width="5.2" height="1.3" fill="#b4b4b4"/><rect x="398.9" y="900.8" width="5.2" height="1.3" fill="#b4b4b4"/>
<circle cx="416.8" cy="897.4" r="2.6" fill="none" stroke="#8a8a8a" stroke-width="1.2"/>
<path d="M416.8 890.4 V893.1 M416.8 901.6999999999999 V904.4 M409.8 897.4 H412.5 M421.1 897.4 H423.8 M411.8 892.4 L413.7 894.3 M419.90000000000003 900.5 L421.8 902.4 M421.8 892.4 L419.90000000000003 894.3 M413.7 900.5 L411.8 902.4" stroke="#8a8a8a" stroke-width="0.9"/>
<path d="M431.5 904.4 L445.4 890.4" stroke="#b4b4b4" stroke-width="1.5" stroke-linecap="round"/>
<path d="M591.6 898.0 C593.2 898.0 593.2 895.1999999999999 591.2 895.1999999999999 C588.6 895.1999999999999 588.2 900.1999999999999 591.4000000000001 900.1999999999999 C595.0 900.1999999999999 596.2 896.4 594.8000000000001 894.0 C593.2 891.4 588.7 891.1999999999999 586.4000000000001 894.4 C584.4000000000001 897.4 585.7 903.0 591.2 903.6 C595.2 903.9 598.2 900.9 598.8000000000001 898.4" fill="none" stroke="#b4b4b4" stroke-width="1.4"/>
<rect x="609.9" y="888.0" width="127.7" height="19.8" fill="#1d1d1d"/>
<path d="M720.5 895.1999999999999 L725.5 900.1999999999999 L730.5 895.1999999999999" fill="none" stroke="#b4b4b4" stroke-width="1.3"/>
<rect x="3" y="911.4" width="763" height="22.8" fill="#474747"/>
<rect x="3" y="934.1999999999999" width="763" height="1.6" fill="#222222"/>
<rect x="8.9" y="913.0" width="18.2" height="18" fill="#3b3b3b"/>
<path d="M10.399999999999999 922.0 C13.7 916.2 22.7 916.2 26.0 922.0 C22.7 927.8 13.7 927.8 10.399999999999999 922.0 Z" fill="#b4b4b4"/>
<circle cx="18.2" cy="922.0" r="3" fill="#1f1f1f"/><circle cx="19.0" cy="921.1" r="1" fill="#b4b4b4"/>
<rect x="51.9" y="913.0" width="18.1" height="18" fill="#3b3b3b"/>
<rect x="73" y="913.0" width="18.9" height="18" fill="#3b3b3b"/>
<path d="M108.3 919.1999999999999 L113.8 924.6999999999999 L119.3 919.1999999999999" fill="none" stroke="#b4b4b4" stroke-width="1.3"/>
<rect x="124.9" y="914.6" width="17.2" height="16.8" fill="#6a7ee6"/>
<path d="M205.60 914.40 L207.62 919.81 L213.40 920.07 L208.88 923.66 L210.42 929.23 L205.60 926.04 L200.78 929.23 L202.32 923.66 L197.80 920.07 L203.58 919.81 Z" fill="#b4b4b4"/>
<rect x="219.8" y="911.8" width="159.1" height="21.8" fill="#a3a3a3"/>
<rect x="386" y="912.9" width="18.8" height="18" fill="#3b3b3b"/>
<rect x="407.6" y="912.9" width="18.4" height="18" fill="#3b3b3b"/>
<rect x="429.2" y="912.9" width="18.4" height="18" fill="#3b3b3b"/>
<rect x="451" y="912.9" width="18.2" height="18" fill="#3b3b3b"/>
<rect x="494" y="912.9" width="18.4" height="18" fill="#3b3b3b"/>
<rect x="515.1" y="912.9" width="18.9" height="18" fill="#3b3b3b"/>
<rect x="537.2" y="912.9" width="18" height="18" fill="#3b3b3b"/>
<path d="M389.1 923.2 C389.1 918.0 392.0 915.4 395.3 915.4 C398.6 915.4 401.5 918.0 401.5 923.2 L396.5 923.2 L396.5 928.6 L394.1 928.6 L394.1 923.2 Z" fill="#b4b4b4"/>
<circle cx="392.8" cy="920.0" r="1.4" fill="#1f1f1f"/><circle cx="397.8" cy="920.0" r="1.4" fill="#1f1f1f"/>
<rect x="386.5" y="925.4" width="5.2" height="1.3" fill="#b4b4b4"/><rect x="398.9" y="925.4" width="5.2" height="1.3" fill="#b4b4b4"/>
<circle cx="416.8" cy="922.0" r="2.6" fill="none" stroke="#8a8a8a" stroke-width="1.2"/>
<path d="M416.8 915.0 V917.7 M416.8 926.3 V929.0 M409.8 922.0 H412.5 M421.1 922.0 H423.8 M411.8 917.0 L413.7 918.9 M419.90000000000003 925.1 L421.8 927.0 M421.8 917.0 L419.90000000000003 918.9 M413.7 925.1 L411.8 927.0" stroke="#8a8a8a" stroke-width="0.9"/>
<path d="M431.5 929.0 L445.4 915.0" stroke="#b4b4b4" stroke-width="1.5" stroke-linecap="round"/>
<path d="M591.6 922.6 C593.2 922.6 593.2 919.8 591.2 919.8 C588.6 919.8 588.2 924.8 591.4000000000001 924.8 C595.0 924.8 596.2 921.0 594.8000000000001 918.6 C593.2 916.0 588.7 915.8 586.4000000000001 919.0 C584.4000000000001 922.0 585.7 927.6 591.2 928.2 C595.2 928.5 598.2 925.5 598.8000000000001 923.0" fill="none" stroke="#b4b4b4" stroke-width="1.4"/>
<rect x="609.9" y="912.6" width="127.7" height="19.8" fill="#1d1d1d"/>
<path d="M720.5 919.8 L725.5 924.8 L730.5 919.8" fill="none" stroke="#b4b4b4" stroke-width="1.3"/>
<rect x="3" y="935.4" width="763" height="24.0" fill="#262626"/>
<rect x="3" y="959.4" width="763" height="1.2" fill="#202020"/>
<circle cx="184.2" cy="947.4" r="6.2" fill="none" stroke="#b4b4b4" stroke-width="1.4"/>
<rect x="181.5" y="937.8" width="5.4" height="1.3" fill="#b4b4b4"/><rect x="183.5" y="938.4" width="1.3" height="2.8" fill="#b4b4b4"/>
<path d="M177.6 940.6 L179.4 942.1999999999999" stroke="#b4b4b4" stroke-width="1.3"/>
<path d="M611.0 947.6 C612.6 947.6 612.6 944.8 610.6 944.8 C608.0 944.8 607.6 949.8 610.8000000000001 949.8 C614.4 949.8 615.6 946.0 614.2 943.6 C612.6 941.0 608.1 940.8 605.8000000000001 944.0 C603.8000000000001 947.0 605.1 952.6 610.6 953.2 C614.6 953.5 617.6 950.5 618.2 948.0" fill="none" stroke="#b4b4b4" stroke-width="1.4"/>
<rect x="3" y="960.4" width="763" height="22.8" fill="#2e2e2e"/>
<rect x="3" y="983.1999999999999" width="763" height="1.6" fill="#222222"/>
<rect x="8.9" y="962.0" width="18.2" height="18" fill="#1f1f1f"/>
<path d="M10.399999999999999 971.0 C13.7 965.2 22.7 965.2 26.0 971.0 C22.7 976.8 13.7 976.8 10.399999999999999 971.0 Z" fill="#b4b4b4"/>
<circle cx="18.2" cy="971.0" r="3" fill="#1f1f1f"/><circle cx="19.0" cy="970.1" r="1" fill="#b4b4b4"/>
<rect x="51.9" y="962.0" width="18.1" height="18" fill="#1f1f1f"/>
<rect x="73" y="962.0" width="18.9" height="18" fill="#1f1f1f"/>
<path d="M108.6 965.8 L113.8 971.0 L108.6 976.1999999999999" fill="none" stroke="#b4b4b4" stroke-width="1.3"/>
<rect x="124.9" y="963.6" width="17.2" height="16.8" fill="#c03838"/>
<rect x="197.5" y="961.8" width="18.6" height="19" fill="#ffffff" stroke="#111" stroke-width="1"/>
<rect x="386" y="961.9" width="18.8" height="18" fill="#1f1f1f"/>
<rect x="407.6" y="961.9" width="18.4" height="18" fill="#1f1f1f"/>
<rect x="429.2" y="961.9" width="18.4" height="18" fill="#1f1f1f"/>
<rect x="494" y="961.9" width="18.4" height="18" fill="#1f1f1f"/>
<rect x="515.1" y="961.9" width="18.9" height="18" fill="#1f1f1f"/>
<rect x="537.2" y="961.9" width="18" height="18" fill="#1f1f1f"/>
<path d="M389.1 972.2 C389.1 967.0 392.0 964.4 395.3 964.4 C398.6 964.4 401.5 967.0 401.5 972.2 L396.5 972.2 L396.5 977.6 L394.1 977.6 L394.1 972.2 Z" fill="#b4b4b4"/>
<circle cx="392.8" cy="969.0" r="1.4" fill="#1f1f1f"/><circle cx="397.8" cy="969.0" r="1.4" fill="#1f1f1f"/>
<rect x="386.5" y="974.4" width="5.2" height="1.3" fill="#b4b4b4"/><rect x="398.9" y="974.4" width="5.2" height="1.3" fill="#b4b4b4"/>
<path d="M431.5 978.0 L445.4 964.0" stroke="#b4b4b4" stroke-width="1.5" stroke-linecap="round"/>
<path d="M591.6 971.6 C593.2 971.6 593.2 968.8 591.2 968.8 C588.6 968.8 588.2 973.8 591.4000000000001 973.8 C595.0 973.8 596.2 970.0 594.8000000000001 967.6 C593.2 965.0 588.7 964.8 586.4000000000001 968.0 C584.4000000000001 971.0 585.7 976.6 591.2 977.2 C595.2 977.5 598.2 974.5 598.8000000000001 972.0" fill="none" stroke="#b4b4b4" stroke-width="1.4"/>
<rect x="609.9" y="961.6" width="127.7" height="19.8" fill="#1d1d1d"/>
<path d="M720.5 968.8 L725.5 973.8 L730.5 968.8" fill="none" stroke="#b4b4b4" stroke-width="1.3"/>
<path d="M10.399999999999999 848.6 C13.7 842.8000000000001 22.7 842.8000000000001 26.0 848.6 C22.7 854.4 13.7 854.4 10.399999999999999 848.6 Z" fill="#b4b4b4"/>
<circle cx="18.2" cy="848.6" r="3" fill="#1f1f1f"/><circle cx="19.0" cy="847.7" r="1" fill="#b4b4b4"/>
<path d="M31 844.8 H34.5 L40.2 840.6 V856.6 L34.5 852.4 H31 Z" fill="#b4b4b4"/>
<path d="M42.6 845 C44.6 846.8 44.6 850.4 42.6 852.2 M45 842.6 C48.6 845.6 48.6 851.6 45 854.6" fill="none" stroke="#b4b4b4" stroke-width="1.5"/>
<circle cx="61" cy="848.6" r="5.4" fill="#b4b4b4"/>
<path d="M78.6 847 V844.6 C78.6 839.6 86.4 839.6 86.4 844.6 V847" fill="none" stroke="#b4b4b4" stroke-width="1.8"/>
<rect x="75.6" y="846.6" width="13.7" height="9.4" rx="0.8" fill="#b4b4b4"/>
<path d="M81.8 849.4 h1.6 l0.4 3.8 h-2.4 Z" fill="#242424"/>
<rect x="99" y="841.2" width="1.6" height="15.2" fill="#101010"/>
<rect x="144.7" y="841.2" width="1.6" height="15.2" fill="#101010"/>
<rect x="191.7" y="841.2" width="1.6" height="15.2" fill="#101010"/>
<rect x="379.2" y="841.2" width="1.6" height="15.2" fill="#101010"/>
<rect x="575.2" y="841.2" width="1.6" height="15.2" fill="#101010"/>
<rect x="743.6" y="841.2" width="1.6" height="15.2" fill="#101010"/>
<path d="M120 841 L127 841 L137.2 851.2 L130.2 858.2 L119.6 847.6 L119.6 841.4 Z" fill="#b4b4b4"/>
<circle cx="123.4" cy="844.4" r="1.3" fill="#242424"/>
<path d="M388.90000000000003 848.8000000000001 C388.90000000000003 843.6 391.8 841.0 395.1 841.0 C398.40000000000003 841.0 401.3 843.6 401.3 848.8000000000001 L396.3 848.8000000000001 L396.3 854.2 L393.90000000000003 854.2 L393.90000000000003 848.8000000000001 Z" fill="#b4b4b4"/>
<circle cx="392.6" cy="845.6" r="1.4" fill="#1f1f1f"/><circle cx="397.6" cy="845.6" r="1.4" fill="#1f1f1f"/>
<rect x="386.3" y="851.0" width="5.2" height="1.3" fill="#b4b4b4"/><rect x="398.7" y="851.0" width="5.2" height="1.3" fill="#b4b4b4"/>
<circle cx="416.9" cy="848.8" r="2.6" fill="none" stroke="#b4b4b4" stroke-width="1.5"/>
<path d="M416.9 841.8 V844.5 M416.9 853.0999999999999 V855.8 M409.9 848.8 H412.59999999999997 M421.2 848.8 H423.9 M411.9 843.8 L413.79999999999995 845.6999999999999 M420.0 851.9 L421.9 853.8 M421.9 843.8 L420.0 845.6999999999999 M413.79999999999995 851.9 L411.9 853.8" stroke="#b4b4b4" stroke-width="1.2"/>
<path d="M431 841.6 L444.6 855" stroke="#b4b4b4" stroke-width="2" stroke-dasharray="2 1.2"/>
<rect x="475.5" y="841.4" width="14" height="11.6" fill="#b4b4b4"/>
<rect x="478.4" y="842.6" width="8.2" height="9.2" fill="#242424"/>
<rect x="479.6" y="846.6" width="5.8" height="1.2" fill="#b4b4b4"/>
<path d="M472.6 844 V855.6 H486.8" fill="none" stroke="#b4b4b4" stroke-width="1.2"/>
<circle cx="499.6" cy="851.2" r="5.2" fill="none" stroke="#b4b4b4" stroke-width="1"/>
<circle cx="502.6" cy="848.6" r="5.2" fill="#242424" stroke="#b4b4b4" stroke-width="1"/>
<circle cx="506.2" cy="845.6" r="5.8" fill="#6a6a6a" stroke="#b4b4b4" stroke-width="1"/>
<circle cx="524.6" cy="848.6" r="6.6" fill="none" stroke="#b4b4b4" stroke-width="1.3"/>
<path d="M529.3 843.9 A6.6 6.6 0 0 1 519.9 853.3 Z" fill="#b4b4b4"/>
<path d="M519.9 853.3 L529.3 843.9" stroke="#b4b4b4" stroke-width="1.3"/>
<path d="M546.2 842.4 L552.6 845.6 V852.4 L546.2 855.6 L539.8 852.4 V845.6 Z M539.8 845.6 L546.2 848.8 L552.6 845.6 M546.2 848.8 V855.6" fill="none" stroke="#b4b4b4" stroke-width="1.2"/>
<path d="M17 760.4 L24.6 768 M24.6 760.4 L17 768" stroke="#a0a0a0" stroke-width="1.2"/>
<rect x="38.8" y="754.8" width="14.6" height="14.2" fill="#a99878"/>
<rect x="137.2" y="759.2" width="12.4" height="1.6" fill="#b0b0b0"/><rect x="137.2" y="763.6" width="12.4" height="1.6" fill="#b0b0b0"/><rect x="137.2" y="768" width="12.4" height="1.6" fill="#b0b0b0"/>
<rect x="147" y="795" width="378" height="26" rx="3" fill="#161616" stroke="#2a2a2a" stroke-width="0.6"/>
<circle cx="164.6" cy="805.2" r="4.6" fill="none" stroke="#a8a8a8" stroke-width="1.4"/>
<path d="M161.4 808.6 L155.6 814.2" stroke="#a8a8a8" stroke-width="1.6" stroke-linecap="round"/>
<path d="M171.2 809.6 L179.6 809.6 L175.4 813.6 Z" fill="#a8a8a8"/>
<rect x="548" y="802.6" width="5" height="1.6" fill="#b4b4b4"/><rect x="551.4" y="800.8" width="5.6" height="5" fill="#b4b4b4"/>
<path d="M557 803.4 H560.2 V810.2 H564.4" fill="none" stroke="#b4b4b4" stroke-width="1.4"/>
<rect x="564.2" y="800.6" width="5.8" height="4.6" fill="#b4b4b4"/><rect x="564.2" y="807.8" width="5.8" height="4.6" fill="#b4b4b4"/>
<path d="M566.2 814.4 L573 814.4 L569.6 818 Z" fill="#b4b4b4"/>
<rect x="597" y="809.4" width="23" height="7.6" fill="#4e4e4e"/>
<path d="M601.4 807.6 C601.4 802 605 798.8 608.5 798.8 C612 798.8 615.6 802 615.6 807.6 Z" fill="#b4b4b4"/>
<rect x="598" y="806.6" width="21" height="2.8" rx="1" fill="#b4b4b4"/>
<rect x="607.2" y="807" width="2.6" height="6.8" rx="1.2" fill="#b4b4b4"/>
<circle cx="605.6" cy="803.6" r="1.5" fill="#262626"/><circle cx="611.4" cy="803.6" r="1.5" fill="#262626"/>
<path d="M637.4 802.6 H635 V818 H650 V815.6" fill="none" stroke="#b4b4b4" stroke-width="1.2"/>
<rect x="641.4" y="797.6" width="14.2" height="16.2" fill="#b4b4b4"/>
<rect x="643.8" y="798.8" width="9.4" height="13.8" fill="#262626"/>
<rect x="644.6" y="805" width="7.8" height="1.5" fill="#b4b4b4"/>
<rect x="636.4" y="803.8" width="4.2" height="13" fill="#b4b4b4"/>
<circle cx="679.4" cy="812" r="6.4" fill="none" stroke="#b4b4b4" stroke-width="1.1"/>
<circle cx="682.6" cy="808.8" r="6.4" fill="#262626" stroke="#b4b4b4" stroke-width="1.1"/>
<circle cx="686.2" cy="805.2" r="6.8" fill="#4f4f4f" stroke="#b4b4b4" stroke-width="1.1"/>
<rect x="722.6" y="800" width="20.6" height="17.4" fill="none" stroke="#b4b4b4" stroke-width="1.3"/>
<path d="M725.4 803.6 C731 803.6 731.4 813.8 738 813.8 H740.6" fill="none" stroke="#b4b4b4" stroke-width="1.3"/>
<path d="M729 796.8 V800 M734 796.8 V800 M738.4 796.8 V800 M721 803.4 H722.6 M721 810.8 H722.6 M721 815 H722.6" stroke="#b4b4b4" stroke-width="1"/>
</svg>
<div class="t b" style="left:155px;top:866.53px;font-size:15.2px;color:#b4b4b4">1</div>
<div class="t b" style="left:224.3px;top:866.5332px;font-size:15.2px;color:#b4b4b4">Bubble Top</div>
<div class="t" style="left:452.5px;top:864.1999999999999px;font-size:19px;font-style:italic;color:#b4b4b4;letter-spacing:-1.5px;font-family:'Liberation Serif',serif">fx</div>
<div class="a" style="left:609.9px;top:862.4px;width:105.5px;height:22px;overflow:hidden"><div class="t b" style="left:8.6px;top:4.130000000000001px;font-size:15.2px;color:#b4b4b4">3. Bubble Bottom</div></div>
<div class="t b" style="left:155px;top:890.93px;font-size:15.2px;color:#b4b4b4">2</div>
<div class="t b" style="left:224.3px;top:890.9331999999999px;font-size:15.2px;color:#b4b4b4">Bubble Middle</div>
<div class="t" style="left:452.5px;top:888.5999999999999px;font-size:19px;font-style:italic;color:#b4b4b4;letter-spacing:-1.5px;font-family:'Liberation Serif',serif">fx</div>
<div class="a" style="left:609.9px;top:886.8px;width:105.5px;height:22px;overflow:hidden"><div class="t b" style="left:8.6px;top:4.130000000000001px;font-size:15.2px;color:#b4b4b4">3. Bubble Bottom</div></div>
<div class="t b" style="left:155px;top:915.53px;font-size:15.2px;color:#b4b4b4">3</div>
<div class="t b" style="left:224.3px;top:915.53px;font-size:15.2px;color:#1c1c1c">Bubble Bottom</div>
<div class="t" style="left:452.5px;top:913.1999999999999px;font-size:19px;font-style:italic;color:#b4b4b4;letter-spacing:-1.5px;font-family:'Liberation Serif',serif">fx</div>
<div class="t b" style="left:618.5px;top:915.87px;font-size:14.8px;color:#b4b4b4">None</div>
<div class="t" style="left:202.5px;top:941.15px;font-size:15.9px;color:#b4b4b4">Rotation</div>
<div class="t" style="left:387.9px;top:941.15px;font-size:15.9px;color:#3a97f0">0<span style="color:#c8c8c8">x</span>+0,0<span style="color:#c8c8c8">°</span></div>
<div class="t b" style="left:155px;top:964.53px;font-size:15.2px;color:#b4b4b4">4</div>
<div class="t b" style="left:224.3px;top:965.0411px;font-size:14.6px;color:#b4b4b4">[BG]</div>
<div class="t b" style="left:618.5px;top:964.87px;font-size:14.8px;color:#b4b4b4">None</div>
<div class="t" style="left:153px;top:843px;font-size:13px;color:#a8a8a8">#</div>
<div class="t" style="left:201.4px;top:842.9px;font-size:13px;color:#a8a8a8">Layer Name</div>
<div class="t" style="left:583.8px;top:842.9px;font-size:13.4px;color:#a8a8a8">Parent &amp; Link</div>
<div class="t" style="left:452.4px;top:838.6px;font-size:19px;font-style:italic;color:#b4b4b4;letter-spacing:-1.5px;font-family:'Liberation Serif',serif">fx</div>
<div class="t" style="left:69px;top:756.2px;font-size:15.5px;color:#c4c4c4">Comp 1</div>
<div class="t b" style="left:20.4px;top:790.1px;font-size:21.5px;color:#3a9ff0">0:00:01:16</div>
<div class="t" style="left:17.5px;top:814.8px;font-size:14.2px;color:#1b7dd0">00040 (24.00 fps)</div>

<div class="a" style="left:0;top:34px;width:1.2px;height:1181px;background:#2e2e2e"></div>
<div class="a" style="left:1.2px;top:34px;width:1px;height:1181px;background:#1c1c1c"></div>
<div class="a" style="left:1997.6px;top:34px;width:1.4px;height:1181px;background:#2e2e2e"></div>
<!-- ============ ARROW ============ -->
<svg style="left:0;top:0" width="1999" height="1227" viewBox="0 0 1999 1227">
 <path d="M1650.5 278.5 L912 909" stroke="#00ff00" stroke-width="5" stroke-linecap="round"/>
 <path d="M891.3 926.8 L914.8 897.2 L924.8 908.6 Z" fill="#00ff00" stroke="#00ff00" stroke-width="1" stroke-linejoin="round"/>
</svg>


</body></html>
